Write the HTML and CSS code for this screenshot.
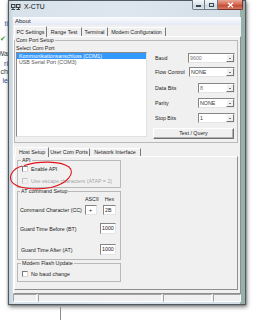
FILE: index.html
```html
<!DOCTYPE html>
<html>
<head>
<meta charset="utf-8">
<link rel="stylesheet" href="styles.css">
</head>
<body>
<div class="bgwin">
  <span class="bg bg-t1">ti</span>
  <span class="bg bg-ck">✔</span>
  <span class="bg bg-t2">Wa</span>
  <span class="bg bg-t3">ri</span>
  <span class="bg bg-t4">ch</span>
  <span class="bg bg-t5">le</span>
</div>

<div class="win">
  <div class="titlebar">
    <svg class="appicon" width="10" height="7" viewBox="0 0 10 7">
      <rect x="0.5" y="0.5" width="3.5" height="3" fill="#cfd8de" stroke="#3a3f44"/>
      <rect x="5.5" y="0.5" width="3.5" height="3" fill="#cfd8de" stroke="#3a3f44"/>
      <path d="M0.5 5.5h3.5M5.5 5.5h3.5M2 3.5v2M7.5 3.5v2" stroke="#3a3f44" fill="none"/>
    </svg>
    <span class="title">X-CTU</span>
    <div class="caps">
      <span class="cap min"><span class="g-min"></span></span>
      <span class="cap max"><span class="g-max"></span></span>
      <span class="cap close">
        <svg width="7" height="6" viewBox="0 0 7 6"><path d="M1 0.8L6 5.2M6 0.8L1 5.2" stroke="#fff" stroke-width="1.3"/></svg>
      </span>
    </div>
  </div>

  <div class="client">
    <div class="menubar"><span>About</span></div>

    <div class="tabs">
      <span class="tab sel w33">PC Settings</span>
      <span class="tab w35">Range Test</span>
      <span class="tab w26">Terminal</span>
      <span class="tab w58">Modem Configuration</span>
    </div>

    <div class="panel">
      <fieldset class="grp com">
        <legend>Com Port Setup</legend>
        <div class="com-body">
          <div class="com-left">
            <div class="lbl-select">Select Com Port</div>
            <div class="listbox">
              <div class="item sel">Kommunikationsanschluss (COM1)</div>
              <div class="item">USB Serial Port (COM3)</div>
            </div>
          </div>
          <div class="com-right">
            <div class="row r-baud"><span class="lbl">Baud</span><span class="dd w47"><span class="val light">9600</span><span class="arr"></span></span></div>
            <div class="row r-flow"><span class="lbl">Flow Control</span><span class="dd w46"><span class="val">NONE</span><span class="arr"></span></span></div>
            <div class="row r-data"><span class="lbl">Data Bits</span><span class="dd w37"><span class="val light">8</span><span class="arr"></span></span></div>
            <div class="row r-par"><span class="lbl">Parity</span><span class="dd w37"><span class="val">NONE</span><span class="arr"></span></span></div>
            <div class="row r-stop"><span class="lbl">Stop Bits</span><span class="dd w37"><span class="val">1</span><span class="arr"></span></span></div>
            <div class="btn">Test / Query</div>
          </div>
        </div>
      </fieldset>

      <div class="itabs">
        <span class="tab sel w34">Host Setup</span>
        <span class="tab w41">User Com Ports</span>
        <span class="tab w51">Network Interface</span>
      </div>

      <div class="ipanel">
        <fieldset class="grp api">
          <legend>API</legend>
          <div class="chk c1"><span class="cb"></span><span>Enable API</span></div>
          <div class="chk c2 dis"><span class="cb"></span><span>Use escape characters (ATAP = 2)</span></div>
        </fieldset>

        <fieldset class="grp at">
          <legend>AT command Setup</legend>
          <div class="at-head"><span class="wa">ASCII</span><span class="wb">Hex</span></div>
          <div class="at-row a1"><span>Command Character (CC)</span><span class="inputs"><span class="inp wa">+</span><span class="inp wb">2B</span></span></div>
          <div class="at-row a2"><span>Guard Time Before (BT)</span><span class="inp wc">1000</span></div>
          <div class="at-row a3"><span class="ind">Guard Time After (AT)</span><span class="inp wc">1000</span></div>
        </fieldset>

        <fieldset class="grp flash">
          <legend>Modem Flash Update</legend>
          <div class="chk c3"><span class="cb"></span><span>No baud change</span></div>
        </fieldset>
      </div>
    </div>

    <div class="status">
      <span class="pane p1"></span>
      <span class="pane p2"></span>
      <span class="pane p3"></span>
      <span class="pane p4"></span>
    </div>
  </div>
</div>

<div class="cable"></div>

<svg class="mark" width="265" height="320" viewBox="0 0 265 320">
  <path d="M24 165.5C38 161 60 160.5 69 167C76 173 67 184 51 187.5C35 190.5 16 188.5 11.5 181.5C8.5 175.5 13 168.5 22 166" fill="none" stroke="#e3121b" stroke-width="1.1"/>
</svg>
</body>
</html>
```

FILE: styles.css
```css
* { box-sizing: border-box; }
html, body { margin: 0; padding: 0; }
body {
  width: 265px;
  height: 320px;
  overflow: hidden;
  position: relative;
  background: #fff;
  font-family: "Liberation Sans", Arial, sans-serif;
  font-size: 5.3px;
  line-height: 6px;
  color: #1c1c1c;
}

/* window behind, left edge */
.bgwin {
  position: absolute;
  left: 0;
  top: 0;
  width: 8px;
  height: 300px;
  overflow: hidden;
  display: flex;
  flex-direction: column;
  align-items: flex-end;
  font-size: 7px;
  line-height: 7px;
}
.bg { white-space: nowrap; color: #333; }
.bg-t1 { margin-top: 20px; color: #2d5fae; }
.bg-ck { margin-top: 8px; color: #3c9b3c; align-self: flex-start; }
.bg-t2 { margin-top: 8px; }
.bg-t3 { margin-top: 3px; color: #2d4f8e; }
.bg-t4 { margin-top: 1px; }
.bg-t5 { margin-top: 2px; color: #2d4f8e; }

/* main window */
.win {
  position: absolute;
  left: 8px;
  top: 0;
  width: 238px;
  height: 305px;
  border: 1px solid #4e5c62;
  background: linear-gradient(90deg, #c2d0da 0, #d8e2eb 4px, #dde6ee 50%, #d3dee6 calc(100% - 5px), #98b0aa calc(100% - 5px));
  box-shadow: 1px 2px 4px rgba(0,0,0,.5), 0 0 2px rgba(0,0,0,.35);
  display: flex;
  flex-direction: column;
  padding: 0 4px 2px;
}
.titlebar {
  height: 16px;
  display: flex;
  align-items: flex-start;
  margin: 0 -2px;
}
.appicon { margin-top: 3px; flex: none; }
.title {
  margin-left: 3px;
  margin-top: 2px;
  font-size: 6.8px;
  line-height: 8px;
  color: #111;
}
.caps {
  margin-left: auto;
  margin-top: -1px;
  display: flex;
  height: 10px;
}
.cap {
  height: 10px;
  border: 1px solid #6d7c86;
  border-top: none;
  background: linear-gradient(#f3f6f9, #dde4ea 50%, #c8d2da 51%, #dfe6ec);
  display: flex;
  align-items: center;
  justify-content: center;
}
.cap.min { width: 13px; border-radius: 0 0 0 2px; }
.cap.max { width: 13px; border-left: none; }
.cap.close {
  width: 25px;
  border-left: none;
  border-color: #7b3127;
  border-radius: 0 0 2px 0;
  background: linear-gradient(#e9a898, #d4654f 50%, #c2412b 51%, #d27b64);
}
.g-min { width: 5px; height: 2px; background: #3b4650; margin-top: 3px; }
.g-max { width: 5px; height: 4px; border: 1px solid #3b4650; border-top-width: 1.5px; }

.client {
  flex: 1;
  background: #f0f0f0;
  display: flex;
  flex-direction: column;
}
.menubar {
  height: 8px;
  padding-left: 2px;
  background: linear-gradient(#fbfcff, #e4e9f5);
  font-size: 6px;
  line-height: 8px;
}

/* tabs */
.tabs, .itabs {
  display: flex;
  align-items: flex-end;
  padding-left: 1px;
  position: relative;
  z-index: 1;
}
.tabs { height: 11px; }
.itabs { height: 10px; margin-top: 3px; }
.tab {
  height: 9px;
  line-height: 8px;
  text-align: center;
  white-space: nowrap;
  border-top: 1px solid #fff;
  border-right: 1px solid #7a7a7a;
}
.itabs .tab { height: 8px; line-height: 7px; }
.tab.sel {
  height: 11px;
  line-height: 10px;
  margin-bottom: -1px;
  background: #f0f0f0;
  border-left: 1px solid #fff;
}
.itabs .tab.sel { height: 10px; line-height: 9px; }
.w33 { width: 33px; }
.w35 { width: 35px; }
.w26 { width: 26px; }
.w58 { width: 58px; }
.w34 { width: 34px; }
.w41 { width: 41px; }
.w51 { width: 51px; }

.panel {
  height: 258px;
  border: 1px solid;
  border-color: #fff #8e8e8e #8e8e8e #fff;
  padding-right: 2px;
  display: flex;
  flex-direction: column;
}

/* group boxes */
fieldset.grp {
  margin: 0;
  min-width: 0;
  border: 1px solid #b9b9b9;
}
.grp > legend {
  padding: 0 1px;
  margin: 0;
  font-size: 5.3px;
  line-height: 6px;
}
.com { margin-top: 4px; padding: 0 2px 3px 1px; }
.com > legend { margin-left: -1px; }
.com-body { display: flex; }
.com-left { width: 131px; flex: none; }
.lbl-select { margin-top: 2px; }
.listbox {
  margin-top: 1px;
  height: 85px;
  background: #fff;
  border: 1px solid;
  border-color: #8a8a8a #e2e2e2 #e2e2e2 #8a8a8a;
}
.item { padding-left: 2px; white-space: nowrap; color: #555; }
.item.sel { background: #3399ff; color: #fff; }

.com-right {
  flex: 1;
  margin-left: 6px;
  margin-top: 10px;
  display: flex;
  flex-direction: column;
}
.row {
  display: flex;
  align-items: center;
  justify-content: space-between;
  padding-left: 2px;
}
.r-flow { margin-top: 4px; }
.r-data { margin-top: 6px; }
.r-par, .r-stop { margin-top: 5px; }
.dd {
  height: 10px;
  background: #fff;
  border: 1px solid;
  border-color: #868686 #e4e4e4 #e4e4e4 #868686;
  display: flex;
  align-items: center;
  padding-left: 1px;
}
.w47 { width: 47px; }
.w46 { width: 46px; }
.w37 { width: 37px; }
.val { flex: 1; color: #333; }
.val.light { color: #777; }
.arr {
  width: 8px;
  height: 8px;
  background: #f0f0f0;
  border: 1px solid;
  border-color: #fff #777 #777 #fff;
  display: flex;
  align-items: center;
  justify-content: center;
}
.arr::after {
  content: "";
  border-left: 1.5px solid transparent;
  border-right: 1.5px solid transparent;
  border-top: 1.5px solid #000;
}
.btn {
  margin-top: 5px;
  margin-right: 1px;
  height: 11px;
  line-height: 9px;
  text-align: center;
  background: #f0f0f0;
  border: 1px solid;
  border-color: #fff #707070 #707070 #fff;
  box-shadow: inset -1px -1px 0 #b0b0b0;
}

/* inner panel */
.ipanel {
  height: 134px;
  border: 1px solid;
  border-color: #fff #8e8e8e #8e8e8e #fff;
  display: flex;
  flex-direction: column;
  align-items: flex-start;
  padding-left: 2px;
}
.ipanel .grp { width: 104px; }
.api { margin-top: 3px; padding: 0 3px 3px 3px; }
.at { margin-top: 1px; padding: 0 4px 4px 2px; }
.at > legend { margin-left: 0; }
.flash { margin-top: 2px; padding: 0 3px 4px 3px; }

.chk {
  display: flex;
  align-items: center;
  gap: 3px;
  margin-left: 1px;
  white-space: nowrap;
}
.c1 { margin-top: 3px; }
.c2 { margin-top: 6px; }
.c3 { margin-top: 5px; }
.cb {
  width: 6px;
  height: 6px;
  flex: none;
  background: #fff;
  border: 1px solid;
  border-color: #7a7a7a #d8d8d8 #d8d8d8 #7a7a7a;
}
.dis { color: #a6a6a6; }
.dis .cb { background: #f0f0f0; border-color: #c4c4c4 #e6e6e6 #e6e6e6 #c4c4c4; }

.at-head {
  margin-top: 2px;
  display: flex;
  justify-content: flex-end;
  gap: 6px;
}
.at-head span { text-align: center; }
.wa { width: 12px; }
.wb { width: 13px; }
.wc { width: 16px; }
.at-row {
  display: flex;
  align-items: center;
  justify-content: space-between;
  white-space: nowrap;
}
.a1 { margin-top: 3px; }
.a2 { margin-top: 8px; }
.a3 { margin-top: 10px; }
.ind { margin-left: 1px; }
.inputs { display: flex; gap: 6px; }
.inp {
  height: 10px;
  line-height: 8px;
  padding-left: 1px;
  background: #fff;
  border: 1px solid;
  border-color: #868686 #e4e4e4 #e4e4e4 #868686;
}
.inp.wa { padding-left: 3px; }
.a2 .inp, .a3 .inp { height: 11px; line-height: 9px; }

/* status bar */
.status {
  height: 8px;
  display: flex;
  gap: 1px;
}
.pane {
  height: 8px;
  border: 1px solid;
  border-color: #a3a3a3 #fff #fff #a3a3a3;
}
.p1 { width: 24px; }
.p2 { width: 124px; }
.p3 { width: 49px; }
.p4 { width: 28px; }

.cable {
  position: absolute;
  left: 60px;
  top: 307px;
  width: 1px;
  height: 13px;
  background: #8c8c8c;
}
.mark {
  position: absolute;
  left: 0;
  top: 0;
  pointer-events: none;
}
```
